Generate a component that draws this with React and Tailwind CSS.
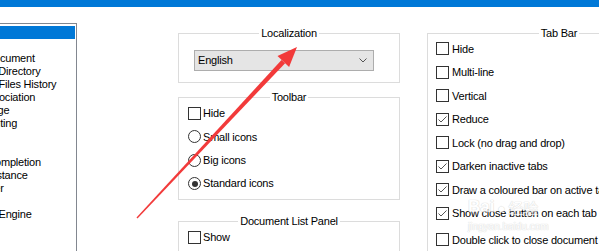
import React from 'react';

const listItems = [
    'General',
    'Editing',
    'New Document',
    'Default Directory',
    'Recent Files History',
    'File Association',
    'Language',
    'Highlighting',
    'Print',
    'Backup',
    'Auto-Completion',
    'Multi-Instance',
    'Delimiter',
    'Cloud',
    'Search Engine',
    'MISC.',
];

function CheckBox({ checked }) {
    return (
        <div className="w-[13px] h-[13px] border border-[#333333] bg-white shrink-0 flex items-center justify-center">
            {checked && (
                <svg width="11" height="11" viewBox="0 0 11 11">
                    <polyline points="1.5,5.5 4,8 9.5,2.5" fill="none" stroke="#555555" strokeWidth="1" />
                </svg>
            )}
        </div>
    );
}

function Radio({ checked }) {
    return (
        <div className="w-[13px] h-[13px] rounded-full border border-[#333333] bg-white shrink-0 flex items-center justify-center">
            {checked && <div className="w-[6px] h-[6px] rounded-full bg-[#333333]" />}
        </div>
    );
}

function Row({ children, label, className = 'h-[23.33px]' }) {
    return (
        <div className={`flex items-center gap-[2px] ${className}`}>
            {children}
            <span className="whitespace-nowrap">{label}</span>
        </div>
    );
}

function Group({ title, className, children }) {
    return (
        <div className={`relative border border-[#dcdcdc] ${className}`}>
            <div className="absolute left-0 right-0 -top-[7px] flex justify-center">
                <span className="bg-white px-[2px] leading-[13px]">{title}</span>
            </div>
            {children}
        </div>
    );
}

function App() {
    const tabBar = [
        ['Hide', false],
        ['Multi-line', false],
        ['Vertical', false],
        ['Reduce', true],
        ['Lock (no drag and drop)', false],
        ['Darken inactive tabs', true],
        ['Draw a coloured bar on active tab', true],
        ['Show close button on each tab', true],
    ];

    return (
        <div className="relative w-[599px] h-[251px] overflow-hidden bg-white text-black text-[11px] tracking-[-0.2px] font-['Liberation_Sans',Arial,sans-serif]">
            <div className="h-[7px] bg-[#0078d7]" />
            <div className="flex items-start">
                <div className="-ml-[42px] mt-[16px] w-[119px] h-[260px] shrink-0 border border-[#828790] pt-[2px] px-[1px]">
                    {listItems.map((item, i) => (
                        <div
                            key={item}
                            className={`h-[13px] leading-[13px] pl-[2px] whitespace-nowrap ${i === 0 ? 'bg-[#0078d7] text-white' : ''}`}
                        >
                            {item}
                        </div>
                    ))}
                </div>

                <div className="ml-[101px] mt-[26px] w-[222px] shrink-0 flex flex-col">
                    <Group title="Localization" className="h-[50px]">
                        <div className="ml-[15px] mt-[16px] w-[180px] h-[21px] border border-[#adadad] bg-[#e5e5e5] flex items-center pl-[3px]">
                            <span>English</span>
                            <svg className="ml-auto mr-[6px]" width="8" height="5" viewBox="0 0 8 5">
                                <polyline points="0.5,0.5 4,4 7.5,0.5" fill="none" stroke="#555555" strokeWidth="1" />
                            </svg>
                        </div>
                    </Group>

                    <Group title="Toolbar" className="mt-[14px] h-[103px] pt-[4px] pl-[9px]">
                        <Row label="Hide"><CheckBox /></Row>
                        <Row label="Small icons"><Radio /></Row>
                        <Row label="Big icons"><Radio /></Row>
                        <Row label="Standard icons"><Radio checked /></Row>
                    </Group>

                    <Group title="Document List Panel" className="mt-[21px] h-[60px] pt-[4px] pl-[9px]">
                        <Row label="Show"><CheckBox /></Row>
                    </Group>
                </div>

                <Group title="Tab Bar" className="ml-[27px] mt-[26px] w-[264px] h-[240px] shrink-0 pt-[3px] pl-[8px]">
                    {tabBar.map(([label, checked]) => (
                        <Row key={label} label={label} className="h-[23.5px] gap-[3px]">
                            <CheckBox checked={checked} />
                        </Row>
                    ))}
                    <Row label="Double click to close document" className="h-[23.5px] gap-[3px] mt-[3px]">
                        <CheckBox />
                    </Row>
                </Group>
            </div>

            <div className="absolute left-[468px] top-[198px] pointer-events-none text-white [text-shadow:0_0_1px_#c8c8c8,0_0_1px_#c8c8c8] opacity-70 tracking-normal">
                <div className="flex items-end gap-[3px] leading-none">
                    <span className="text-[17px] font-bold">Bai</span>
                    <span className="text-[13px]">●</span>
                    <span className="text-[15px] font-['Noto_Sans_CJK_SC',sans-serif]">经验</span>
                </div>
                <div className="text-[10px] mt-[4px]">jingyan.baidu.com</div>
            </div>

            <svg className="absolute inset-0 pointer-events-none" width="599" height="251" viewBox="0 0 599 251">
                <polygon points="137.5,218.5 136.5,217.5 281.5,59.9 285.1,63.3" fill="#f23a3a" />
                <polygon points="297,47 277.5,56.1 289.1,67.1" fill="#f23a3a" />
            </svg>
        </div>
    );
}

export default App;
